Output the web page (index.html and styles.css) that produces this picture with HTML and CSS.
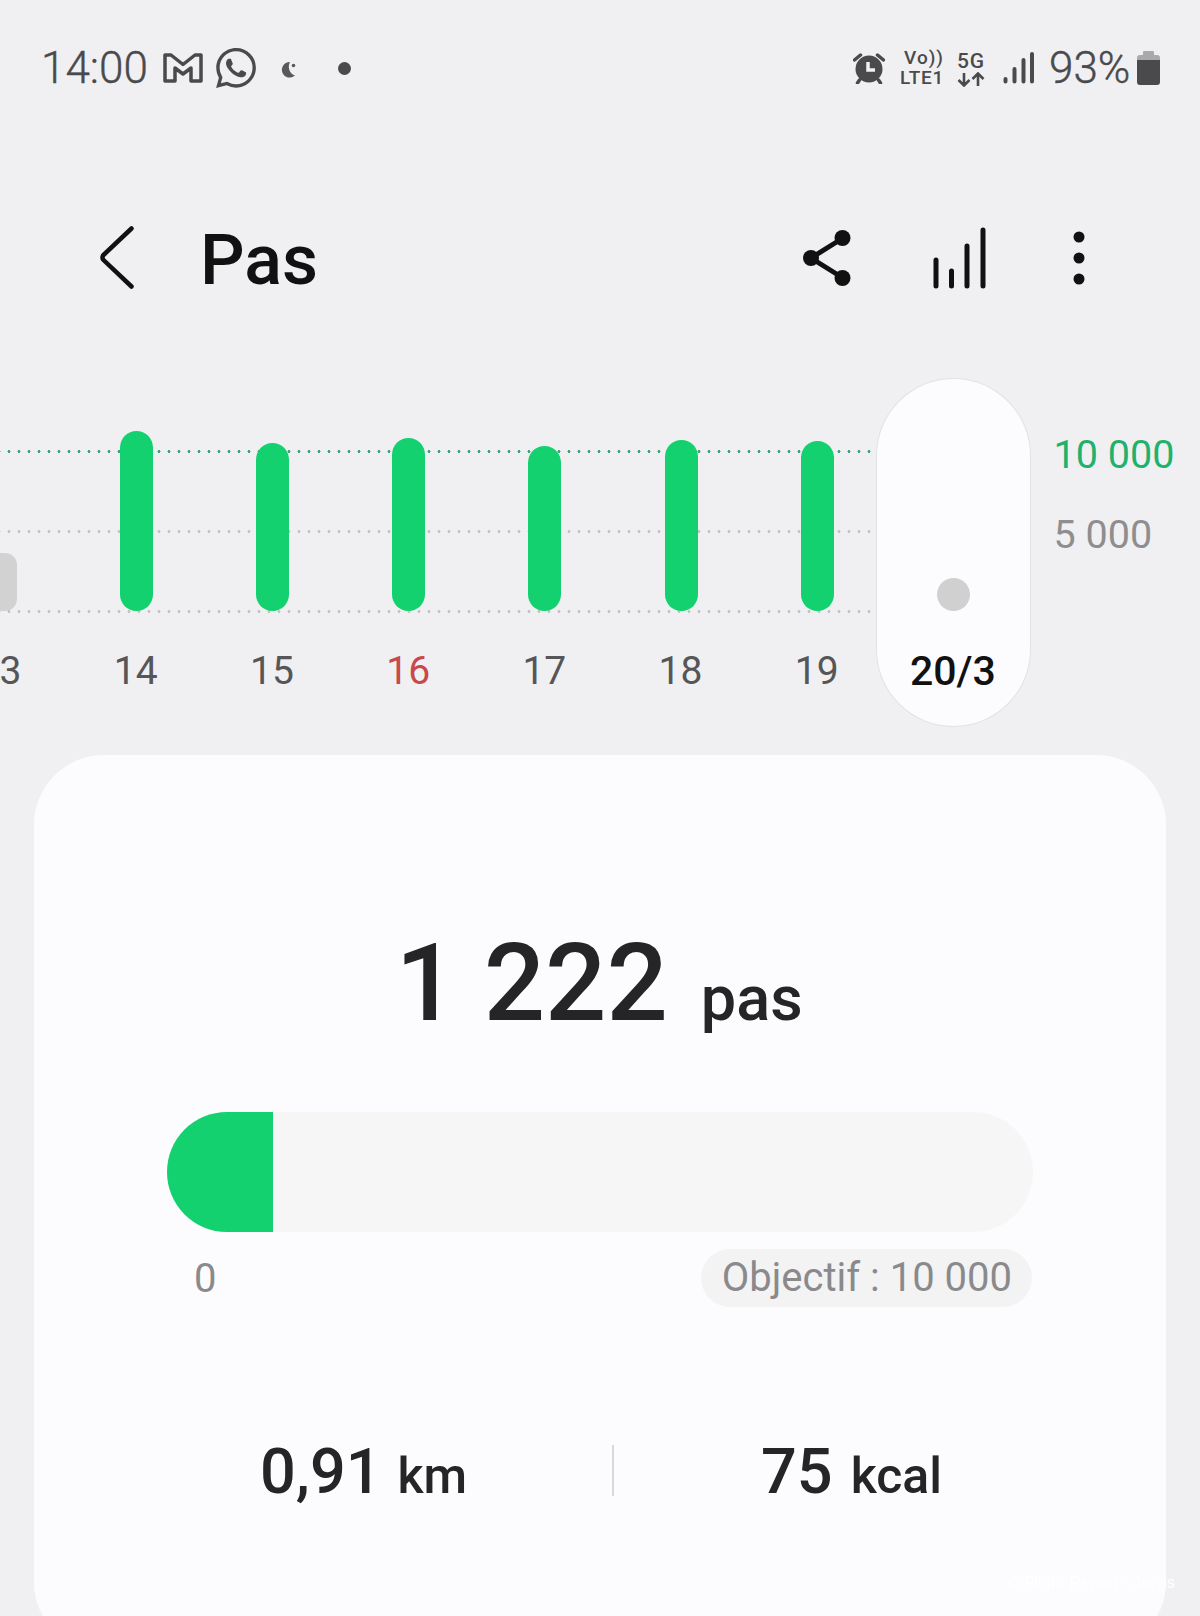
FILE: index.html
```html
<!DOCTYPE html>
<html lang="fr">
<head>
<title>Pas</title>
<meta charset="UTF-8">
<link rel="stylesheet" href="styles.css">
</head>
<body>
  <div class="screen">

    <!-- status bar -->
    <div class="status">
      <span class="clock">14:00</span>
      <svg class="ic-gmail" width="40" height="30" viewBox="0 0 40 30">
        <path d="M2 2h6l12 9.500 12-9.500h6v26h-10v-13l-8 6-8-6v13h-10z" fill="none" stroke="#4a4a4c" stroke-width="3.500" stroke-linejoin="round"/>
      </svg>
      <svg class="ic-whatsapp" width="40" height="40" viewBox="0 0 24 24" fill="#4a4a4c">
        <path d="M17.472 14.382c-.297-.149-1.758-.867-2.03-.967-.273-.099-.471-.148-.67.15-.197.297-.767.966-.94 1.164-.173.199-.347.223-.644.075-.297-.15-1.255-.463-2.39-1.475-.883-.788-1.48-1.761-1.653-2.059-.173-.297-.018-.458.13-.606.134-.133.298-.347.446-.52.149-.174.198-.298.298-.497.099-.198.05-.371-.025-.52-.075-.149-.669-1.612-.916-2.207-.242-.579-.487-.5-.669-.51-.173-.008-.371-.01-.57-.01-.198 0-.52.074-.792.372-.272.297-1.04 1.016-1.04 2.479 0 1.462 1.065 2.875 1.213 3.074.149.198 2.096 3.2 5.077 4.487.709.306 1.262.489 1.694.625.712.227 1.36.195 1.871.118.571-.085 1.758-.719 2.006-1.413.248-.694.248-1.289.173-1.413-.074-.124-.272-.198-.57-.347m-5.421 7.403h-.004a9.87 9.87 0 01-5.031-1.378l-.361-.214-3.741.982.998-3.648-.235-.374a9.86 9.86 0 01-1.51-5.26c.001-5.45 4.436-9.884 9.888-9.884 2.64 0 5.122 1.03 6.988 2.898a9.825 9.825 0 012.893 6.994c-.003 5.45-4.437 9.884-9.885 9.884m8.413-18.297A11.815 11.815 0 0012.05 0C5.495 0 .16 5.335.157 11.892c0 2.096.547 4.142 1.588 5.945L.057 24l6.305-1.654a11.882 11.882 0 005.683 1.448h.005c6.554 0 11.89-5.335 11.893-11.893a11.821 11.821 0 00-3.48-8.413z"/>
      </svg>
      <svg class="ic-moon" width="15" height="17" viewBox="0 0 15 17">
        <path d="M9 1a7.800 7.800 0 1 0 5 13.500a9.500 9.500 0 0 1-5-13.500z" fill="#59595b"/>
        <circle cx="12.500" cy="4.500" r="1.800" fill="#59595b"/>
      </svg>
      <span class="status-dot"></span>

      <div class="status-right">
        <svg class="ic-alarm" width="32" height="31" viewBox="0 0 32 31">
          <circle cx="16" cy="16" r="13.500" fill="#4a4a4c"/>
          <path d="M1.500 7l6-5M30.500 7l-6-5M6.500 27l-2 3M25.500 27l2 3" stroke="#4a4a4c" stroke-width="3.500" stroke-linecap="round"/>
          <path d="M15 9v8h7" fill="none" stroke="#f0f0f2" stroke-width="3.500"/>
        </svg>
        <div class="net net-volte">
          <span class="net-top">Vo))</span>
          <span class="net-bottom">LTE1</span>
        </div>
        <div class="net net-5g">
          <span class="net-5g-label">5G</span>
          <svg width="28" height="15" viewBox="0 0 28 15">
            <path d="M7 1v12M1.500 8l5.500 5.500 5.500-5.500M21 14v-12M15.500 7l5.500-5.500 5.500 5.500" fill="none" stroke="#4a4a4c" stroke-width="2.600"/>
          </svg>
        </div>
        <svg class="ic-signal" width="31" height="32" viewBox="0 0 31 32">
          <g stroke="#4a4a4c" stroke-width="4" stroke-linecap="round">
            <path d="M2.500 27v2.500M11.500 17v12.500M20.500 8v21.500M29 2v27.500"/>
          </g>
        </svg>
        <span class="battery-level">93%</span>
        <svg width="23" height="34" viewBox="0 0 23 34">
          <path d="M7 0h9a1 1 0 0 1 1 1v3h3a3 3 0 0 1 3 3v3h-23v-3a3 3 0 0 1 3-3h3v-3a1 1 0 0 1 1-1z" fill="#a9a9ab"/>
          <path d="M0 9h23v22a3 3 0 0 1-3 3h-17a3 3 0 0 1-3-3z" fill="#4a4a4c"/>
        </svg>
      </div>
    </div>

    <!-- title bar -->
    <div class="topbar">
      <svg class="back" width="34" height="63" viewBox="0 0 34 63">
        <path d="M31.500 2.500l-28 26.500a3.500 3.500 0 0 0 0 5l28 26.500" fill="none" stroke="#111" stroke-width="4.500" stroke-linecap="round" stroke-linejoin="round"/>
      </svg>
      <h1 class="title">Pas</h1>
      <div class="actions">
        <svg class="act-share" width="48" height="56" viewBox="0 0 48 56">
          <path d="M40 8l-32 20 32 20" fill="none" stroke="#111" stroke-width="5"/>
          <circle cx="39.500" cy="8" r="8" fill="#111"/>
          <circle cx="8" cy="28" r="8" fill="#111"/>
          <circle cx="39.500" cy="48" r="8" fill="#111"/>
        </svg>
        <svg class="act-stats" width="54" height="62" viewBox="0 0 54 62">
          <g stroke="#111" stroke-width="5" stroke-linecap="round">
            <path d="M3 33v26M18.500 44v15M34 19v40M50 3v56"/>
          </g>
        </svg>
        <svg width="12" height="54" viewBox="0 0 12 54">
          <circle cx="6" cy="6" r="5.500" fill="#111"/>
          <circle cx="6" cy="27" r="5.500" fill="#111"/>
          <circle cx="6" cy="48" r="5.500" fill="#111"/>
        </svg>
      </div>
    </div>

    <!-- week chart -->
    <div class="chart">
      <div class="gridline gridline-goal"></div>
      <div class="gridline gridline-mid"></div>
      <div class="gridline gridline-base"></div>

      <div class="day">
        <div class="bar-slot"><div class="bar bar-low" style="height:58px"></div></div>
        <span class="day-label">13</span>
      </div>
      <div class="day">
        <div class="bar-slot"><div class="bar" style="height:180px"></div></div>
        <span class="day-label">14</span>
      </div>
      <div class="day">
        <div class="bar-slot"><div class="bar" style="height:168px"></div></div>
        <span class="day-label">15</span>
      </div>
      <div class="day">
        <div class="bar-slot"><div class="bar" style="height:173px"></div></div>
        <span class="day-label day-sunday">16</span>
      </div>
      <div class="day">
        <div class="bar-slot"><div class="bar" style="height:165px"></div></div>
        <span class="day-label">17</span>
      </div>
      <div class="day">
        <div class="bar-slot"><div class="bar" style="height:171px"></div></div>
        <span class="day-label">18</span>
      </div>
      <div class="day">
        <div class="bar-slot"><div class="bar" style="height:170px"></div></div>
        <span class="day-label">19</span>
      </div>
      <div class="day day-today">
        <div class="bar-slot"><div class="today-dot"></div></div>
        <span class="day-label">20/3</span>
      </div>

      <div class="axis">
        <span class="axis-goal">10 000</span>
        <span>5 000</span>
      </div>
    </div>

    <!-- today's card -->
    <div class="card">
      <div class="total">
        <span class="total-num">1 222</span>
        <span class="total-unit">pas</span>
      </div>

      <div class="track">
        <div class="track-fill" style="width:12.22%"></div>
      </div>
      <div class="track-labels">
        <span class="track-zero">0</span>
        <span class="goal">Objectif : 10 000</span>
      </div>

      <div class="stats">
        <div class="stat stat-km"><b>0,91</b><span>km</span></div>
        <div class="stat-sep"></div>
        <div class="stat stat-kcal"><b>75</b><span>kcal</span></div>
      </div>
    </div>

    <div class="watermark">© Flight-Report - Jarvis</div>
  </div>
</body>
</html>
```

FILE: styles.css
```css
body {
    margin: 0;
    background-color: #f0f0f2;
    font-family: Roboto, sans-serif;
}
.screen {
    position: relative;
    width: 1200px;
    height: 1616px;
    overflow: hidden;
    background-color: #f0f0f2;
}

/* status bar */
.status {
    display: flex;
    align-items: center;
    height: 136px;
    padding: 0 40px 0 41px;
    box-sizing: border-box;
    color: #4a4a4c;
}
.clock {
    width: 122px;
    font-size: 44px;
    font-weight: 300;
    -webkit-text-stroke: 0.4px #4a4a4c;
}
.ic-whatsapp {
    margin-left: 13px;
}
.ic-moon {
    margin: 2px 0 0 25px;
}
.status-dot {
    width: 13px;
    height: 13px;
    margin-left: 42px;
    border-radius: 50%;
    background-color: #4a4a4c;
}
.status-right {
    display: flex;
    align-items: center;
    margin-left: auto;
}
.net {
    display: flex;
    flex-direction: column;
    align-items: center;
    font-weight: 500;
}
.net-volte {
    width: 44px;
    margin-left: 15px;
}
.net-top {
    margin-left: 4px;
    font-size: 19px;
    line-height: 20px;
    letter-spacing: 1px;
}
.net-bottom {
    font-size: 19px;
    line-height: 20px;
    letter-spacing: 0.7px;
}
.net-5g {
    width: 28px;
    margin-left: 13px;
}
.net-5g-label {
    font-size: 21px;
    line-height: 22px;
    letter-spacing: 1px;
}
.ic-signal {
    margin-left: 18px;
}
.battery-level {
    width: 77px;
    margin: 0 11px 0 15px;
    font-size: 44px;
    font-weight: 300;
    -webkit-text-stroke: 0.4px #4a4a4c;
}

/* title bar */
.topbar {
    display: flex;
    align-items: center;
    height: 243px;
    padding: 0 115px 0 100px;
    box-sizing: border-box;
}
.title {
    margin: 0 0 0 66px;
    padding-top: 4px;
    font-size: 70px;
    font-weight: 500;
    color: #111;
}
.actions {
    display: flex;
    align-items: center;
    margin-left: auto;
}
.act-share {
    margin-right: 82px;
}
.act-stats {
    margin-right: 86px;
}

/* week chart */
.chart {
    position: relative;
    display: flex;
    height: 347px;
    margin-left: -68px;
}
.gridline {
    position: absolute;
    left: 68px;
    width: 872px;
    height: 3px;
    background-image: radial-gradient(circle, #c4c4c6 1.3px, transparent 1.7px);
    background-size: 10px 3px;
    background-position: 4px 0;
}
.gridline-goal {
    top: 71px;
    background-image: radial-gradient(circle, #3fa57a 1.3px, transparent 1.7px);
}
.gridline-mid {
    top: 151px;
}
.gridline-base {
    top: 231px;
}
.day {
    position: relative;
    display: flex;
    flex-direction: column;
    align-items: center;
    flex: none;
    width: 136.2px;
}
.bar-slot {
    display: flex;
    align-items: flex-end;
    height: 232px;
}
.bar {
    width: 33px;
    border-radius: 17px;
    background-color: #13d16e;
}
.bar-low {
    border-radius: 12px;
    background-color: #d2d2d3;
}
.day-label {
    margin-top: 30px;
    padding-right: 1px;
    font-size: 39px;
    line-height: 60px;
    color: #565658;
}
.day-sunday {
    color: #c8494a;
}
.day-today {
    width: 153px;
    height: 347px;
    margin: 0 -8.4px;
    border-radius: 77px;
    background-color: #fcfcfe;
    box-shadow: 0 0 0 1px #e2e2e4;
}
.day-today .day-label {
    font-size: 41px;
    font-weight: 500;
    color: #111;
}
.today-dot {
    width: 33px;
    height: 33px;
    border-radius: 50%;
    background-color: #d0d0d1;
}
.axis {
    display: flex;
    flex-direction: column;
    flex: none;
    margin-left: 32px;
    padding-top: 36px;
    font-size: 39.5px;
    line-height: 80px;
    color: #8e8e90;
}
.axis-goal {
    color: #1fb26d;
}

/* today's card */
.card {
    height: 897px;
    margin: 29px 34px 0;
    padding-top: 174px;
    box-sizing: border-box;
    border-radius: 70px;
    background-color: #fcfcfe;
    color: #252528;
}
.total {
    display: flex;
    align-items: baseline;
    justify-content: center;
    gap: 33px;
    height: 108px;
    padding-right: 2px;
    line-height: 108px;
    font-weight: 500;
}
.total-num {
    font-size: 108px;
}
.total-unit {
    font-size: 63px;
}
.track {
    height: 120px;
    margin: 75px 133px 0 133px;
    border-radius: 60px;
    overflow: hidden;
    background-color: #f6f6f7;
}
.track-fill {
    height: 100%;
    background-color: #13d16e;
}
.track-labels {
    display: flex;
    align-items: center;
    justify-content: space-between;
    margin: 17px 134px 0 160px;
    font-size: 40px;
    color: #8a8a8c;
}
.goal {
    padding: 0 20px 0 21px;
    line-height: 58px;
    border-radius: 29px;
    background-color: #f3f3f4;
}

.stats {
    display: flex;
    align-items: center;
    height: 51px;
    margin-top: 138px;
    padding-left: 226px;
}
.stat {
    display: flex;
    align-items: baseline;
    margin-top: 6px;
    font-weight: 500;
    font-size: 50px;
    line-height: 51px;
}
.stat b {
    font-size: 63px;
    font-weight: 500;
}
.stat-km {
    width: 352px;
}
.stat-km span {
    margin-left: 16px;
}
.stat-kcal span {
    margin-left: 18px;
}
.stat-sep {
    width: 2px;
    height: 51px;
    background-color: #d9d9da;
}
.stat-kcal {
    margin-left: 147px;
}

.watermark {
    position: absolute;
    top: 1574px;
    left: 1008px;
    font-family: "Liberation Sans", sans-serif;
    font-size: 16px;
    letter-spacing: 0.1px;
    color: #ffffff;
    white-space: nowrap;
}
```
